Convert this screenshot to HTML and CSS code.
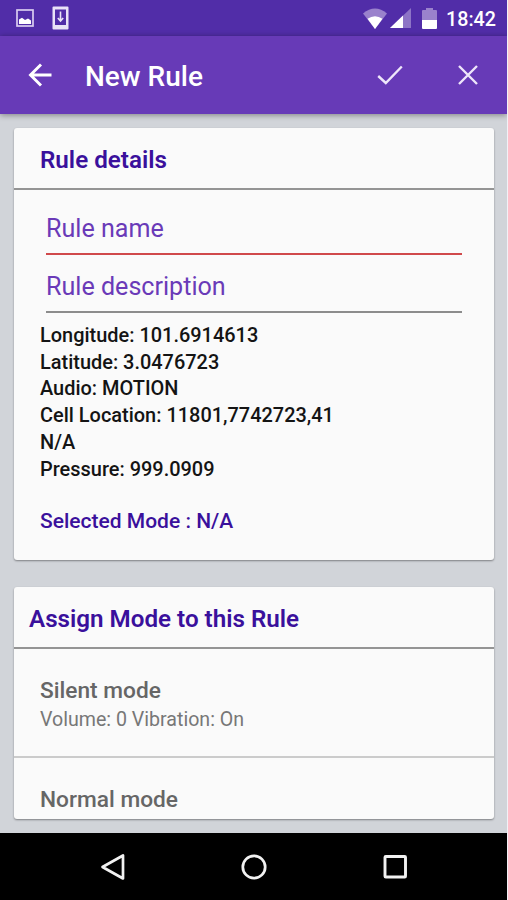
FILE: index.html
```html
<!DOCTYPE html>
<html lang="en">
<head>
  <meta charset="UTF-8" />
  <meta name="viewport" content="width=device-width, initial-scale=1.0"/>
  <title>New Rule</title>
  <link rel="stylesheet" href="styles.css">
</head>
<body>
  <div class="screen">

    <div class="status-bar">
      <svg class="icon-picture" width="18" height="18" viewBox="0 0 18 18">
        <rect x="1" y="1" width="16" height="16" fill="none" stroke="#d9cdf0" stroke-width="1.7"/>
        <path d="M3 15V10.5L6 8.8L9 11L12 9.5L15 11.5V15Z" fill="#fff"/>
      </svg>
      <svg class="icon-download" width="17" height="24" viewBox="0 0 17 24">
        <path d="M0.5 1.5Q0.5 0.5 1.5 0.5H15.5Q16.5 0.5 16.5 1.5V22.5Q16.5 23.5 15.5 23.5H1.5Q0.5 23.5 0.5 22.5ZM3 3.5V19H14V3.5Z" fill="#e9e2f7" fill-rule="evenodd"/>
        <path d="M8.5 5.5V14M5.8 12L8.5 15L11.2 12" fill="none" stroke="#e9e2f7" stroke-width="1.6"/>
      </svg>
      <div class="spacer"></div>
      <svg class="icon-wifi" width="24" height="21" viewBox="0 0 24 21">
        <path d="M12 21L0 5.5Q12 -4.5 24 5.5Z" fill="#9a82cc"/>
        <path d="M12 21L4.5 10.8Q12 5.5 19.5 10.8Z" fill="#fff"/>
      </svg>
      <svg class="icon-signal" width="21" height="20" viewBox="0 0 21 20">
        <path d="M0 20L21 0V20Z" fill="#8d74c6"/>
        <path d="M0 20L13 7.6V20Z" fill="#fff"/>
      </svg>
      <svg class="icon-battery" width="15" height="21" viewBox="0 0 15 21">
        <path d="M0 3Q0 2 1 2H4V0H11V2H14Q15 2 15 3V12H0Z" fill="#9a82cc"/>
        <path d="M0 12H15V20Q15 21 14 21H1Q0 21 0 20Z" fill="#fff"/>
      </svg>
      <span class="clock">18:42</span>
    </div>

    <div class="toolbar">
      <svg class="icon-back" width="24" height="24" viewBox="0 0 24 24">
        <path d="M23.5 12H2.5M13 1.5L2.5 12L13 22.5" fill="none" stroke="#fff" stroke-width="2.9"/>
      </svg>
      <h1 class="title">New Rule</h1>
      <div class="spacer"></div>
      <svg class="icon-check" width="26" height="20" viewBox="0 0 26 20">
        <path d="M1.2 11L8.8 18L24.8 1.5" fill="none" stroke="#eee6fa" stroke-width="2.4"/>
      </svg>
      <svg class="icon-close" width="20" height="20" viewBox="0 0 20 20">
        <path d="M1 1L19 19M19 1L1 19" fill="none" stroke="#eee6fa" stroke-width="2.4"/>
      </svg>
    </div>

    <div class="content">
      <div class="card details">
        <h2 class="card-title">Rule details</h2>
        <div class="card-body">
          <div class="field error">Rule name</div>
          <div class="field">Rule description</div>
          <ul class="info">
            <li>Longitude: 101.6914613</li>
            <li>Latitude: 3.0476723</li>
            <li>Audio: MOTION</li>
            <li>Cell Location: 11801,7742723,41</li>
            <li>N/A</li>
            <li>Pressure: 999.0909</li>
          </ul>
          <div class="selected">Selected Mode : N/A</div>
        </div>
      </div>

      <div class="card modes">
        <h2 class="card-title">Assign Mode to this Rule</h2>
        <div class="mode">
          <div class="mode-name">Silent mode</div>
          <div class="mode-info">Volume: 0 Vibration: On</div>
        </div>
        <div class="mode">
          <div class="mode-name">Normal mode</div>
        </div>
      </div>
    </div>

    <div class="nav-bar">
      <svg width="28" height="28" viewBox="0 0 28 28">
        <path d="M24 2.5V25.5L3.5 14Z" fill="none" stroke="#f2f2f2" stroke-width="2.7" stroke-linejoin="round"/>
      </svg>
      <svg width="28" height="28" viewBox="0 0 28 28">
        <circle cx="14" cy="14" r="11.2" fill="none" stroke="#f2f2f2" stroke-width="2.7"/>
      </svg>
      <svg width="28" height="28" viewBox="0 0 28 28">
        <rect x="4" y="3.5" width="20.5" height="20.5" rx="0.8" fill="none" stroke="#f2f2f2" stroke-width="2.9"/>
      </svg>
    </div>

  </div>
</body>
</html>
```
FILE: styles.css
```css
body {
  margin: 0;
  background-color: #f3f1f6;
  font-family: Roboto, "Liberation Sans", sans-serif;
}
h1, h2, ul {
  margin: 0;
  padding: 0;
}
svg {
  display: block;
  flex-shrink: 0;
}
.screen {
  display: flex;
  flex-direction: column;
  width: 507px;
  height: 900px;
  overflow: hidden;
}
.spacer {
  flex: 1;
}

/* top bars */
.status-bar {
  display: flex;
  align-items: center;
  box-sizing: border-box;
  height: 36px;
  padding: 0 11px 0 16px;
  background-color: #512da8;
}
.icon-download {
  margin-left: 18px;
}
.icon-signal {
  margin-left: 3px;
}
.icon-battery {
  margin-left: 11px;
}
.clock {
  margin-left: 9px;
  color: #fff;
  font-size: 19.7px;
  font-weight: 500;
  line-height: 36px;
  padding-top: 3px;
}
.toolbar {
  display: flex;
  align-items: center;
  box-sizing: border-box;
  height: 78px;
  padding: 0 29px 0 28px;
  background-color: #673ab7;
  box-shadow: 0 1px 6px rgba(0, 0, 0, 0.4);
  z-index: 1;
}
.title {
  margin-left: 33px;
  color: #fff;
  font-size: 28px;
  font-weight: 500;
  line-height: 78px;
  padding-top: 3px;
}
.icon-close {
  margin-left: 55px;
}

/* cards */
.content {
  display: flex;
  flex-direction: column;
  gap: 27px;
  box-sizing: border-box;
  height: 719px;
  padding: 14px 13px 14px 14px;
  background-color: #d1d4d9;
}
.card {
  box-sizing: border-box;
  background-color: #fafafa;
  border-radius: 3px;
  box-shadow: 0 1px 2px rgba(0, 0, 0, 0.4);
  overflow: hidden;
}
.details {
  height: 432px;
}
.modes {
  height: 232px;
}
.card-title {
  height: 60px;
  padding-left: 26px;
  border-bottom: 2px solid #949494;
  color: #3a109c;
  font-size: 24.2px;
  font-weight: 600;
  line-height: 65px;
}
.modes .card-title {
  padding-left: 15px;
}
.card-body {
  padding: 11px 26px 0;
}
.field {
  box-sizing: border-box;
  height: 58px;
  margin: 0 6px;
  padding-top: 11px;
  border-bottom: 2px solid #8c8c8c;
  color: #6a3ab8;
  font-size: 25.1px;
  font-weight: 400;
  line-height: 42px;
}
.field:first-child {
  height: 54px;
  padding-top: 7px;
}
.field.error {
  border-bottom-color: #d0494b;
}
.info {
  list-style: none;
  padding-top: 9px;
  color: #141414;
  font-size: 19.95px;
  font-weight: 500;
  line-height: 26.7px;
}
.selected {
  padding-top: 26px;
  color: #3a109c;
  font-size: 21px;
  font-weight: 500;
  line-height: 27px;
}
.mode {
  box-sizing: border-box;
  height: 109px;
  padding: 27px 26px 0;
  border-bottom: 2px solid #cbcbcb;
  color: #666;
}
.mode-name {
  font-size: 22.7px;
  font-weight: 500;
  line-height: 30px;
}
.mode-info {
  color: #777;
  font-size: 19.6px;
  font-weight: 400;
  line-height: 28px;
}

/* android buttons */
.nav-bar {
  display: flex;
  align-items: center;
  justify-content: center;
  gap: 113px;
  height: 67px;
  background-color: #000;
}
```
